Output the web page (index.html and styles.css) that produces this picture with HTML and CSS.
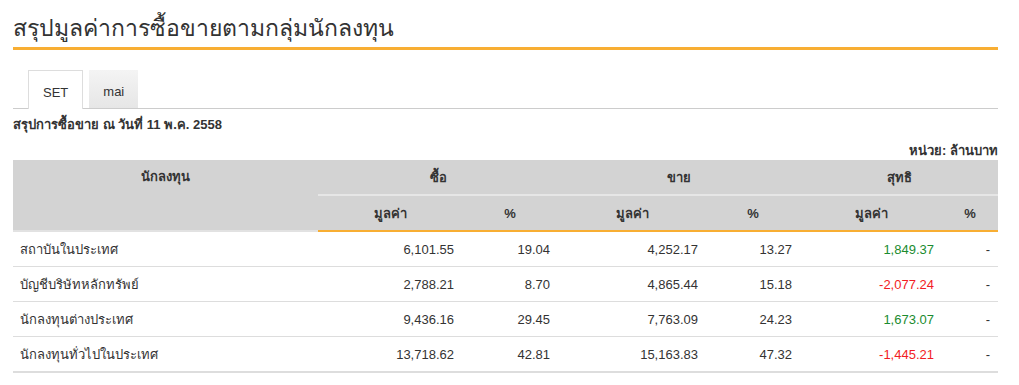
FILE: index.html
```html
<!DOCTYPE html>
<html lang="th">
<head>
<meta charset="utf-8">
<title>สรุปมูลค่าการซื้อขายตามกลุ่มนักลงทุน</title>
<link rel="stylesheet" href="styles.css">
</head>
<body>
<div class="page">
  <h1 class="title">สรุปมูลค่าการซื้อขายตามกลุ่มนักลงทุน</h1>
  <div class="tabs">
    <div class="tab active">SET</div>
    <div class="tab">mai</div>
  </div>
  <div class="subtitle">สรุปการซื้อขาย ณ วันที่ 11 พ.ค. 2558</div>
  <div class="unit">หน่วย: ล้านบาท</div>
  <table class="data">
    <colgroup>
      <col class="c-name"><col class="c-v1"><col class="c-p1"><col class="c-v2"><col class="c-p2"><col class="c-v3"><col class="c-p3">
    </colgroup>
    <thead>
      <tr class="h1row">
        <th rowspan="2" class="h-name">นักลงทุน</th>
        <th colspan="2">ซื้อ</th>
        <th colspan="2">ขาย</th>
        <th colspan="2">สุทธิ</th>
      </tr>
      <tr class="h2row">
        <th>มูลค่า</th><th>%</th>
        <th>มูลค่า</th><th>%</th>
        <th>มูลค่า</th><th>%</th>
      </tr>
    </thead>
    <tbody>
      <tr>
        <td class="name">สถาบันในประเทศ</td>
        <td>6,101.55</td><td>19.04</td><td>4,252.17</td><td>13.27</td><td class="pos">1,849.37</td><td>-</td>
      </tr>
      <tr>
        <td class="name">บัญชีบริษัทหลักทรัพย์</td>
        <td>2,788.21</td><td>8.70</td><td>4,865.44</td><td>15.18</td><td class="neg">-2,077.24</td><td>-</td>
      </tr>
      <tr>
        <td class="name">นักลงทุนต่างประเทศ</td>
        <td>9,436.16</td><td>29.45</td><td>7,763.09</td><td>24.23</td><td class="pos">1,673.07</td><td>-</td>
      </tr>
      <tr>
        <td class="name">นักลงทุนทั่วไปในประเทศ</td>
        <td>13,718.62</td><td>42.81</td><td>15,163.83</td><td>47.32</td><td class="neg">-1,445.21</td><td>-</td>
      </tr>
    </tbody>
  </table>
</div>
</body>
</html>
```
FILE: styles.css
```css
html, body {
  margin: 0;
  padding: 0;
  background: #ffffff;
}
body {
  font-family: "Liberation Sans", Arial, sans-serif;
  font-size: 13px;
  color: #333333;
}
.page {
  width: 985px;
  padding: 0 0 0 13px;
}
.title {
  margin: 0;
  padding-top: 9px;
  height: 38px;
  font-size: 23px;
  line-height: 38px;
  font-weight: normal;
  color: #333333;
  border-bottom: 3px solid #f8ae33;
}
.tabs {
  display: flex;
  gap: 6px;
  margin-top: 20px;
  padding-left: 15px;
  border-bottom: 1px solid #cccccc;
  height: 38px;
}
.tab {
  height: 38px;
  line-height: 43px;
  padding: 0 14px;
  box-sizing: border-box;
  color: #333333;
  font-size: 13px;
  background: linear-gradient(#f4f4f4, #e6e6e6);
}
.tab.active {
  background: #ffffff;
  border: 1px solid #dddddd;
  border-bottom: none;
  height: 39px;
  padding: 0 14px;
  line-height: 43px;
}
.subtitle {
  font-weight: bold;
  margin-top: 7px;
  line-height: 17px;
}
.unit {
  font-weight: bold;
  text-align: right;
  margin-top: 9px;
  line-height: 17px;
}
.data {
  width: 985px;
  border-collapse: collapse;
  table-layout: fixed;
  margin-top: 1px;
}
.c-name { width: 305px; }
.c-v1 { width: 144px; }
.c-p1 { width: 96px; }
.c-v2 { width: 148px; }
.c-p2 { width: 94px; }
.c-v3 { width: 142px; }
.c-p3 { width: 56px; }
.data th {
  background: #d3d3d3;
  font-weight: bold;
  text-align: center;
  padding: 0 8px;
  color: #333333;
}
.h1row th {
  height: 34px;
  border-bottom: 2px solid #e6e6e6;
}
.h1row th.h-name {
  vertical-align: top;
  line-height: 34px;
  border-bottom: 2px solid #e2e2e2;
}
.h2row th {
  height: 34px;
  border-bottom: 2px solid #f8ae33;
}
.data td {
  height: 34px;
  padding: 0 8px;
  text-align: right;
  border-bottom: 1px solid #dddddd;
}
.data tbody tr:last-child td {
  border-bottom: 2px solid #dddddd;
}
.data td.name {
  text-align: left;
  padding-left: 7px;
}
.data td.pos { color: #1b8c2f; }
.data td.neg { color: #f21c24; }
```
